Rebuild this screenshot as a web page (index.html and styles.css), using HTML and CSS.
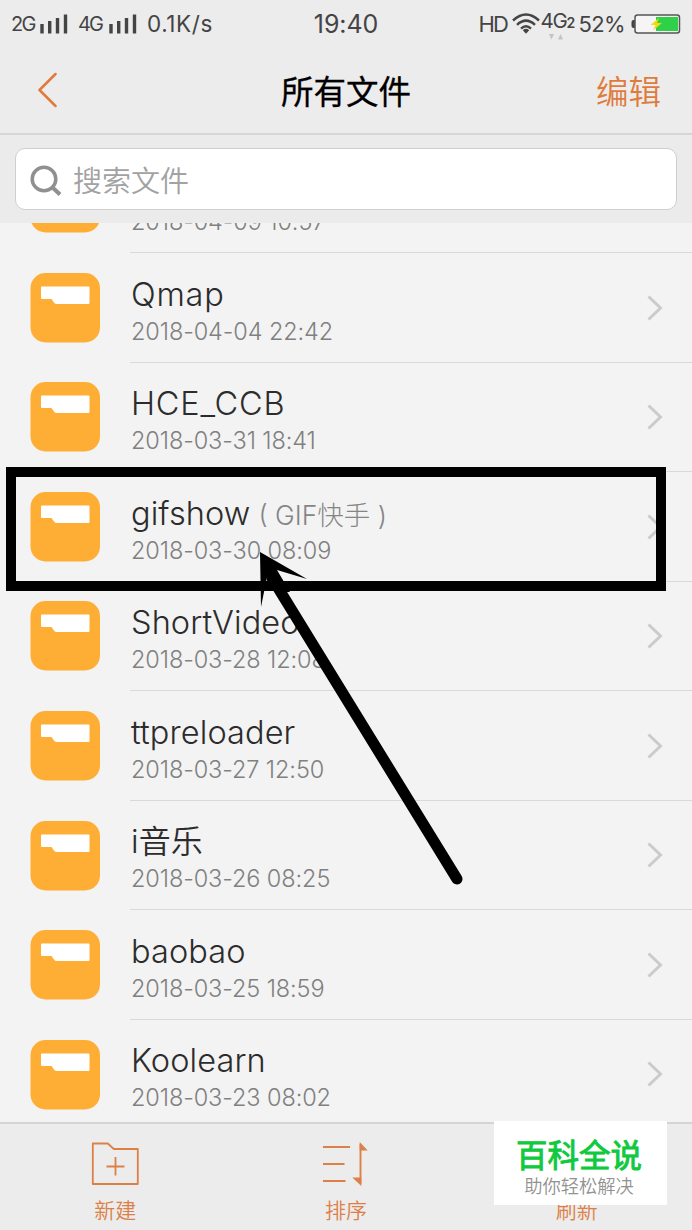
FILE: index.html
```html
<!DOCTYPE html>
<html lang="zh-CN">
<head>
    <meta charset="UTF-8">
    <meta name="viewport" content="width=device-width, initial-scale=1.0">
    <title>所有文件</title>
    <link rel="stylesheet" href="styles.css">
</head>
<body>
    <svg width="0" height="0" class="symbols">
        <symbol id="folder" viewBox="0 0 70 70">
            <rect x="0.500" width="69.500" height="69.500" rx="15" fill="#ffae35"/>
            <path d="M11 14.500q0-1 1-1h46.500q1 0 1 1v15.500q0 1-1 1H27q-2 0-3-1.500l-2.500-3.500H12q-1 0-1-1z" fill="#fff"/>
        </symbol>
        <symbol id="chevron" viewBox="0 0 16 26">
            <path d="M1.500 1.500L13.500 13L1.500 24.500" fill="none" stroke="#cbcbcb" stroke-width="3"/>
        </symbol>
        <symbol id="signal" viewBox="0 0 28 20">
            <path d="M2 10v9.500M9.700 7v12.500M17.500 4v15.500M25.500 0.500v19" stroke="#444" stroke-width="3.400"/>
        </symbol>
    </svg>

    <header class="status-bar">
        <div class="status-left">
            <span class="net net-2g">2G</span>
            <svg class="signal"><use href="#signal"/></svg>
            <span class="net net-4g">4G</span>
            <svg class="signal"><use href="#signal"/></svg>
            <span class="speed">0.1K/s</span>
        </div>
        <div class="clock">19:40</div>
        <div class="status-right">
            <span class="hd">HD</span>
            <svg class="wifi" viewBox="0 0 28 21">
                <g fill="none" stroke="#444" stroke-width="2.500">
                    <path d="M1 7.500Q14-4.500 27 7.500"/>
                    <path d="M5 11.800Q14 3.500 23 11.800"/>
                    <path d="M9 15.600Q14 11 19 15.600"/>
                </g>
                <path d="M10.800 17.200Q14 14.500 17.200 17.200L14 20.800z" fill="#444"/>
            </svg>
            <span class="data">
                <span class="data-type">4G<b>2</b></span>
                <svg class="arrows" viewBox="0 0 14 6"><path d="M0 0h5L2.500 5.500zM9 5.500h5L11.500 0z" fill="#c4c4c4"/></svg>
            </span>
            <span class="percent">52%</span>
            <svg class="battery" viewBox="0 0 50 20">
                <path d="M4 6H2.500Q0.500 6 0.500 8v4q0 2 2 2h1.500z" fill="#444"/>
                <rect x="4" y="1" width="44.500" height="18" rx="2.500" fill="#f5f5f5" stroke="#555" stroke-width="1.500"/>
                <path d="M25 3h22v14H25z" fill="#2fd149"/>
                <path d="M28 4l-8.500 7h5l-2.500 5.500 9-7.500h-5z" fill="#f2dc10"/>
            </svg>
        </div>
    </header>

    <nav class="title-bar">
        <svg class="back" viewBox="0 0 20 36"><path d="M18.500 2L2.500 18L18.500 34" fill="none" stroke="#e07b3e" stroke-width="2.500" stroke-linecap="round" stroke-linejoin="round"/></svg>
        <h1>所有文件</h1>
        <a class="edit">编辑</a>
    </nav>

    <div class="search-bar">
        <div class="search-box">
            <svg class="search-icon" viewBox="0 0 32 32">
                <circle cx="14" cy="15" r="11.800" fill="none" stroke="#909090" stroke-width="3.500"/>
                <path d="M22 23l8 7.500" stroke="#909090" stroke-width="4"/>
            </svg>
            <span>搜索文件</span>
        </div>
    </div>

    <main class="file-list">
        <div class="row row-first">
            <svg class="folder"><use href="#folder"/></svg>
            <div class="info"><div class="text"><div class="date">2018-04-09 10:57</div></div></div>
        </div>
        <div class="row">
            <svg class="folder"><use href="#folder"/></svg>
            <div class="info"><div class="text"><div class="name wide">Qmap</div><div class="date">2018-04-04 22:42</div></div><svg class="chevron"><use href="#chevron"/></svg></div>
        </div>
        <div class="row">
            <svg class="folder"><use href="#folder"/></svg>
            <div class="info"><div class="text"><div class="name wide">HCE_CCB</div><div class="date">2018-03-31 18:41</div></div><svg class="chevron"><use href="#chevron"/></svg></div>
        </div>
        <div class="row">
            <svg class="folder"><use href="#folder"/></svg>
            <div class="info"><div class="text"><div class="name">gifshow<span class="alias">( GIF快手 )</span></div><div class="date">2018-03-30 08:09</div></div><svg class="chevron"><use href="#chevron"/></svg></div>
        </div>
        <div class="row">
            <svg class="folder"><use href="#folder"/></svg>
            <div class="info"><div class="text"><div class="name">ShortVideo</div><div class="date">2018-03-28 12:08</div></div><svg class="chevron"><use href="#chevron"/></svg></div>
        </div>
        <div class="row">
            <svg class="folder"><use href="#folder"/></svg>
            <div class="info"><div class="text"><div class="name">ttpreloader</div><div class="date">2018-03-27 12:50</div></div><svg class="chevron"><use href="#chevron"/></svg></div>
        </div>
        <div class="row">
            <svg class="folder"><use href="#folder"/></svg>
            <div class="info"><div class="text"><div class="name">i<span class="han">音乐</span></div><div class="date">2018-03-26 08:25</div></div><svg class="chevron"><use href="#chevron"/></svg></div>
        </div>
        <div class="row">
            <svg class="folder"><use href="#folder"/></svg>
            <div class="info"><div class="text"><div class="name">baobao</div><div class="date">2018-03-25 18:59</div></div><svg class="chevron"><use href="#chevron"/></svg></div>
        </div>
        <div class="row">
            <svg class="folder"><use href="#folder"/></svg>
            <div class="info"><div class="text"><div class="name">Koolearn</div><div class="date">2018-03-23 08:02</div></div><svg class="chevron"><use href="#chevron"/></svg></div>
        </div>
    </main>

    <footer class="toolbar">
        <div class="tool">
            <svg viewBox="0 0 48 44" fill="none" stroke="#dd8047" stroke-width="1.800" stroke-linejoin="round">
                <path d="M1.800 1.500h15l6 5.500h24v35h-45zM24.500 15v18.500M15.500 24.500h18"/>
            </svg>
            <span>新建</span>
        </div>
        <div class="tool">
            <svg viewBox="0 0 48 44" fill="none" stroke="#dd8047" stroke-width="1.900">
                <path d="M1 5h27M1 22h21.500M1 39h22.500M38.500 2v40"/>
                <path d="M37.700 0v8.500h8zM39.300 44v-8.500h-9z" fill="#dd8047" stroke="none"/>
            </svg>
            <span>排序</span>
        </div>
        <div class="tool">
            <svg viewBox="0 0 48 44"></svg>
            <span>刷新</span>
        </div>
    </footer>

    <!-- annotations over the list -->
    <div class="highlight"></div>
    <svg class="pointer" viewBox="0 0 210 340">
        <path d="M17 26L202 327" stroke="#000" stroke-width="11" stroke-linecap="round"/>
        <path d="M5 0L52 27L22 18L35 40L22 40L12 25L6 55z" fill="#000"/>
    </svg>
    <div class="watermark">
        <strong>百科全说</strong>
        <span>助你轻松解决</span>
    </div>
</body>
</html>
```
FILE: styles.css
```css
* {
    box-sizing: border-box;
}
body {
    margin: 0;
    width: 692px;
    height: 1230px;
    overflow: hidden;
    position: relative;
    display: flex;
    flex-direction: column;
    background-color: #f3f3f3;
    color: #2c2c2c;
    font-family: Inter, "Noto Sans CJK SC", sans-serif;
    font-weight: 300;
    white-space: nowrap;
}
svg {
    display: block;
    flex: none;
}
.symbols {
    position: absolute;
}
.status-bar {
    height: 48px;
    flex: none;
    display: grid;
    grid-template-columns: 1fr auto 1fr;
    align-items: center;
    padding: 0 11px 1px 11px;
    background-color: #ececec;
    color: #444;
    font-weight: 400;
    font-size: 22px;
}
.status-left, .status-right {
    display: flex;
    align-items: center;
}
.status-right {
    justify-content: flex-end;
}
.net {
    font-size: 20px;
    letter-spacing: -1.8px;
    width: 29px;
}
.net-4g {
    margin-left: 10px;
    width: 31px;
}
.signal {
    width: 28px;
    height: 20px;
}
.speed {
    margin-left: 10px;
    font-size: 22.500px;
    letter-spacing: 0.6px;
}
.clock {
    font-size: 25px;
    letter-spacing: -0.1px;
}
.hd {
    letter-spacing: -1.6px;
    margin-right: 5px;
}
.wifi {
    width: 28px;
    height: 21px;
}
.data {
    height: 30px;
    width: 38px;
    font-size: 20.500px;
    line-height: 23px;
    letter-spacing: -1.2px;
}
.data b {
    font-size: 14px;
    font-weight: 600;
}
.arrows {
    width: 14px;
    height: 6px;
    margin-left: 9px;
}
.percent {
    letter-spacing: -0.6px;
    margin-right: 6px;
}
.battery {
    width: 50px;
    height: 20px;
}
.title-bar {
    height: 87px;
    flex: none;
    display: grid;
    grid-template-columns: 1fr auto 1fr;
    align-items: center;
    padding: 0 31px 2px 37px;
    background-color: #ececec;
    border-bottom: 2px solid #d6d6d6;
}
.back {
    width: 20px;
    height: 36px;
}
h1 {
    margin: 0 6px 0 0;
    font-size: 32.500px;
    font-weight: 400;
    -webkit-text-stroke: 0.3px #000;
    color: #000;
}
.edit {
    justify-self: end;
    font-size: 32.500px;
    font-weight: 350;
    color: #e07b3e;
}
.search-bar {
    height: 88px;
    flex: none;
    padding: 13px 15px;
    background-color: #ebebeb;
}
.search-box {
    height: 62px;
    display: flex;
    align-items: center;
    gap: 11px;
    padding: 2px 14px 0;
    background-color: #fff;
    border: 1.500px solid #cfcfcf;
    border-radius: 10px;
    color: #a2a2a2;
    font-size: 29px;
    font-weight: 350;
}
.search-box span {
    margin-top: -2px;
}
.search-icon {
    width: 32px;
    height: 32px;
}
.file-list {
    height: 899px;
    flex: none;
    overflow: hidden;
}
.row {
    height: 109.550px;
    display: flex;
    align-items: center;
    gap: 30px;
    padding-left: 30px;
}
.row-first {
    height: 30px;
    overflow: hidden;
    align-items: flex-end;
}
.row-first .folder {
    margin-bottom: 20px;
}
.folder {
    width: 70px;
    height: 70px;
}
.info {
    flex: 1;
    height: 109.550px;
    flex-shrink: 0;
    display: flex;
    justify-content: space-between;
    align-items: flex-end;
    border-bottom: 1px solid #d9d9d9;
}
.text {
    padding: 0 0 15px 1px;
}
.name {
    height: 42px;
    line-height: 40px;
    font-size: 32.500px;
    letter-spacing: 0.1px;
}
.wide {
    letter-spacing: 0.8px;
}
.alias {
    margin-left: 8px;
    font-size: 26.500px;
    letter-spacing: 0;
    color: #858585;
}
.han {
    font-size: 32px;
    font-weight: 350;
}
.date {
    height: 30px;
    line-height: 30px;
    font-size: 23.500px;
    letter-spacing: -0.1px;
    color: #808080;
}
.chevron {
    width: 16px;
    height: 26px;
    margin: 0 29px 41px 0;
}
.toolbar {
    height: 108px;
    flex: none;
    display: grid;
    grid-template-columns: repeat(3, 1fr);
    background-color: #ececec;
    border-top: 2px solid #d4d4d4;
    color: #dd8047;
}
.tool {
    display: flex;
    flex-direction: column;
    align-items: center;
    padding-top: 18px;
    font-size: 21px;
    font-weight: 350;
}
.tool svg {
    width: 48px;
    height: 44px;
}
.tool span {
    line-height: 30px;
    margin-top: 10px;
}
.highlight {
    position: absolute;
    left: 6px;
    top: 467px;
    width: 660px;
    height: 124px;
    border: 10px solid #000;
}
.pointer {
    position: absolute;
    left: 255px;
    top: 552px;
    width: 210px;
    height: 340px;
}
.watermark {
    position: absolute;
    left: 494px;
    top: 1121px;
    width: 173px;
    height: 84px;
    background-color: #fff;
    display: flex;
    flex-direction: column;
    align-items: center;
    padding: 16px 3px 0 0;
}
.watermark strong {
    font-size: 31.500px;
    line-height: 38px;
    font-weight: 400;
    -webkit-text-stroke: 0.9px #0fc93e;
    color: #0fc93e;
}
.watermark span {
    font-size: 18.300px;
    line-height: 22px;
    font-weight: 350;
    color: #929292;
}
```
